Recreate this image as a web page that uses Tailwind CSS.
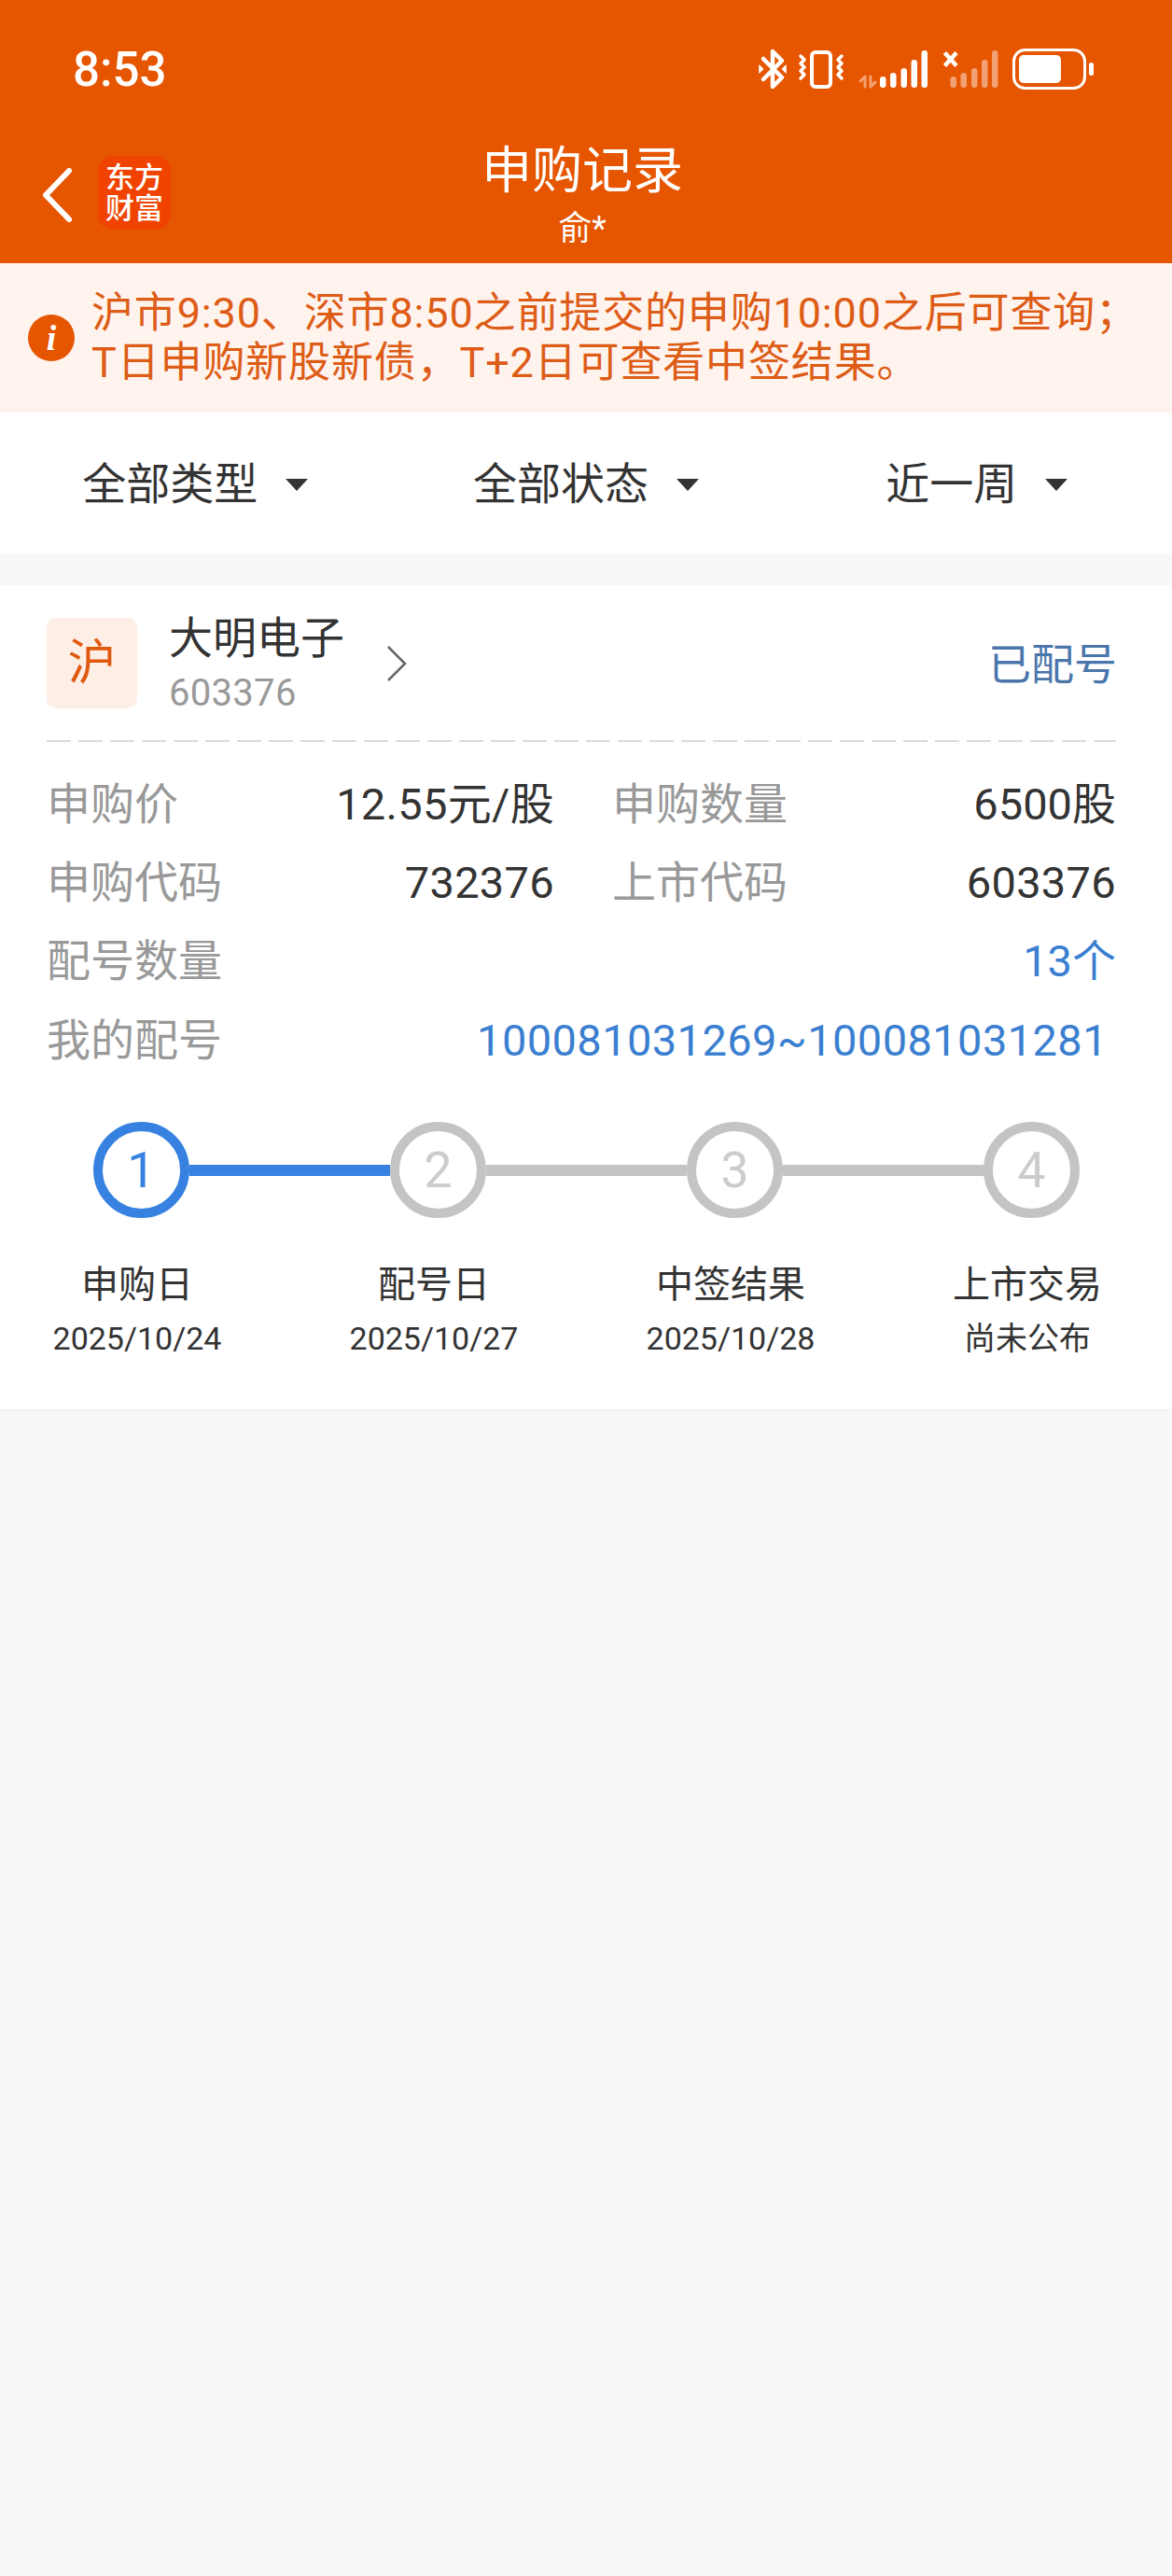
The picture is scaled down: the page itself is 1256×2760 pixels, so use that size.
<!DOCTYPE html>
<html lang="zh-CN">
<head>
  <meta charset="UTF-8" />
  <meta name="viewport" content="width=device-width, initial-scale=1.0" />
  <title>申购记录</title>
  <script src="https://cdn.jsdelivr.net/npm/@tailwindcss/browser@4"></script>
</head>
<body class="bg-[#f7f8fa] min-h-screen [font-family:Roboto,'Noto_Sans_CJK_SC',sans-serif] text-[#333333]">

  <!-- header -->
  <header class="bg-[#e65500] h-[282px] text-white">
    <div class="h-[148px] flex items-center justify-between pl-[78px] pr-[84px]">
      <span class="text-[51px] leading-none font-medium">8:53</span>
      <svg width="362" height="48" viewBox="810 48 362 48" fill="none" stroke="white" stroke-linecap="round" stroke-linejoin="round">
        <path d="M818 61 L838 81 L828 91 L828 53 L838 63 L818 83" stroke-width="4.5"/>
        <path d="M814 68 L818 72 L814 76Z M842 68 L838 72 L842 76Z" fill="white" stroke-width="1"/>
        <rect x="870" y="54" width="20" height="37" rx="4" stroke-width="4"/>
        <path d="M858 58 L862 62 L858 66 L862 70 L858 74 L862 78 L858 82" stroke-width="3.5"/>
        <path d="M902 58 L898 62 L902 66 L898 70 L902 74 L898 78 L902 82" stroke-width="3.5"/>
        <path d="M927 80 V91 M922 85 L927 80 M933 80 V91 M938 86 L933 91" stroke="white" stroke-opacity="0.45" stroke-width="3"/>
        <g stroke="none" fill="white">
          <rect x="943" y="80" width="6.5" height="12" rx="3.2"/>
          <rect x="954" y="76" width="6.5" height="16" rx="3.2"/>
          <rect x="965.5" y="71" width="6.5" height="21" rx="3.2"/>
          <rect x="976.5" y="62" width="6.5" height="30" rx="3.2"/>
          <rect x="987.5" y="52" width="6.5" height="40" rx="3.2"/>
        </g>
        <path d="M1012.5 54.5 L1025 68.5 M1025 54.5 L1012.5 68.5" stroke-width="4.5" stroke-linecap="butt"/>
        <g stroke="none" fill="white" fill-opacity="0.45">
          <rect x="1018.5" y="80" width="6.5" height="12" rx="3.2"/>
          <rect x="1029.5" y="76" width="6.5" height="16" rx="3.2"/>
          <rect x="1041" y="71" width="6.5" height="21" rx="3.2"/>
          <rect x="1052" y="62" width="6.5" height="30" rx="3.2"/>
          <rect x="1063" y="52" width="6.5" height="40" rx="3.2"/>
        </g>
        <rect x="1086.5" y="51.5" width="76" height="41" rx="12" stroke-width="3"/>
        <rect x="1092" y="57" width="45" height="30" rx="5" fill="white" stroke="none"/>
        <rect x="1167" y="65" width="5" height="14" rx="2.5" fill="white" stroke="none"/>
      </svg>
    </div>
    <div class="h-[134px] grid grid-cols-[1fr_auto_1fr]">
      <div class="flex items-start pl-[46px] pt-[19px]">
        <svg class="mt-[13px]" width="31" height="58" viewBox="0 0 31 58" fill="none" stroke="white" stroke-width="6" stroke-linecap="round" stroke-linejoin="round">
          <path d="M28 3 L3 29 L28 55"/>
        </svg>
        <div class="ml-[28px] w-[78px] h-[79px] rounded-[16px] bg-[#f04300] flex flex-col items-center justify-center text-[31px] leading-[33px] font-medium">
          <span>东方</span>
          <span>财富</span>
        </div>
      </div>
      <div class="flex flex-col items-center pr-[8px]">
        <h1 class="text-[54px] leading-[66px] pt-[3px]">申购记录</h1>
        <p class="text-[36px] leading-[56px]">俞*</p>
      </div>
      <div></div>
    </div>
  </header>

  <!-- notice -->
  <div class="bg-[#fff3ee] h-[160px] flex items-center pl-[30px] text-[#dd5c16]">
    <div class="w-[50px] h-[50px] rounded-full bg-[#e65500] flex items-center justify-center text-white text-[38px] leading-none italic font-bold [font-family:'Liberation_Serif',serif]">i</div>
    <p class="ml-[18px] text-[45px] leading-[53px] tracking-[0.85px] whitespace-nowrap">沪市9:30、深市8:50之前提交的申购10:00之后可查询；<br />T日申购新股新债，T+2日可查看中签结果。</p>
  </div>

  <!-- filters -->
  <div class="bg-white h-[151px] grid grid-cols-3 text-[47px]">
    <div class="flex items-center justify-center gap-[30px] pt-[4px]">
      <span>全部类型</span>
      <span class="w-0 h-0 border-x-[12px] border-x-transparent border-t-[13px] border-t-[#333333]"></span>
    </div>
    <div class="flex items-center justify-center gap-[30px] pt-[4px]">
      <span>全部状态</span>
      <span class="w-0 h-0 border-x-[12px] border-x-transparent border-t-[13px] border-t-[#333333]"></span>
    </div>
    <div class="flex items-center justify-center gap-[30px] pt-[4px]">
      <span>近一周</span>
      <span class="w-0 h-0 border-x-[12px] border-x-transparent border-t-[13px] border-t-[#333333]"></span>
    </div>
  </div>

  <!-- record card -->
  <section class="mt-[34px] bg-white h-[884px] border-b border-[#eeeeee] pl-[50px] pr-[60px] pt-[35px]">
    <div class="flex items-center h-[97px]">
      <div class="w-[97px] h-[97px] rounded-[10px] bg-[#fdeee6] flex items-center justify-center text-[52px] text-[#e0590f]">沪</div>
      <div class="ml-[34px] h-[97px] flex flex-col justify-between pt-[1px]">
        <span class="text-[47px] leading-[42px]">大明电子</span>
        <span class="text-[40px] leading-[32px] tracking-[0.3px] text-[#999999]">603376</span>
      </div>
      <svg class="ml-[45px]" width="22" height="38" viewBox="0 0 22 38" fill="none" stroke="#666666" stroke-width="2.5">
        <path d="M2 1 L20 19 L2 37"/>
      </svg>
      <span class="ml-auto text-[46px] text-[#4a76ab] pt-[4px] pl-[2px] -mr-[1px]">已配号</span>
    </div>

    <svg class="mt-[34px] block" width="1146" height="2" viewBox="0 0 1146 2">
      <line x1="0" y1="1" x2="1146" y2="1" stroke="#d0d0d0" stroke-width="1.5" stroke-dasharray="26 8"/>
    </svg>

    <div class="mt-[25px] text-[47px]">
      <div class="grid grid-cols-[544px_540px] gap-x-[62px]">
        <div class="h-[84px] flex items-center justify-between"><span class="text-[#999999]">申购价</span><span class="tracking-[0.3px]">12.55元/股</span></div>
        <div class="h-[84px] flex items-center justify-between"><span class="text-[#999999]">申购数量</span><span>6500股</span></div>
        <div class="h-[84px] flex items-center justify-between"><span class="text-[#999999]">申购代码</span><span class="tracking-[0.3px]">732376</span></div>
        <div class="h-[84px] flex items-center justify-between"><span class="text-[#999999]">上市代码</span><span class="tracking-[0.3px]">603376</span></div>
      </div>
      <div class="h-[85px] flex items-center justify-between"><span class="text-[#999999]">配号数量</span><span class="text-[#3b7fd0]">13个</span></div>
      <div class="h-[84px] flex items-center justify-between"><span class="text-[#999999]">我的配号</span><span class="text-[#3b7fd0] pr-[9px] tracking-[0.4px]">100081031269~100081031281</span></div>
    </div>

    <!-- steps -->
    <div class="mt-[45px] ml-[50px] mr-[39px] flex items-center text-[54px]">
      <div class="shrink-0 w-[103px] h-[103px] rounded-full border-[10px] border-[#3782e0] text-[#3782e0] flex items-center justify-center">1</div>
      <div class="flex-1 h-[12px] bg-[#3782e0]"></div>
      <div class="shrink-0 w-[103px] h-[103px] rounded-full border-[10px] border-[#c4c4c4] text-[#cccccc] flex items-center justify-center">2</div>
      <div class="flex-1 h-[12px] bg-[#c4c4c4]"></div>
      <div class="shrink-0 w-[103px] h-[103px] rounded-full border-[10px] border-[#c4c4c4] text-[#cccccc] flex items-center justify-center">3</div>
      <div class="flex-1 h-[12px] bg-[#c4c4c4]"></div>
      <div class="shrink-0 w-[103px] h-[103px] rounded-full border-[10px] border-[#c4c4c4] text-[#cccccc] flex items-center justify-center">4</div>
    </div>
    <div class="mt-[46px] ml-[-62px] grid grid-cols-[repeat(4,318px)] text-center">
      <div><p class="text-[40px] leading-[52px]">申购日</p><p class="mt-[9px] text-[34px] leading-[44px]">2025/10/24</p></div>
      <div><p class="text-[40px] leading-[52px]">配号日</p><p class="mt-[9px] text-[34px] leading-[44px]">2025/10/27</p></div>
      <div><p class="text-[40px] leading-[52px]">中签结果</p><p class="mt-[9px] text-[34px] leading-[44px]">2025/10/28</p></div>
      <div><p class="text-[40px] leading-[52px]">上市交易</p><p class="mt-[9px] text-[34px] leading-[44px]">尚未公布</p></div>
    </div>
  </section>
</body>
</html>
